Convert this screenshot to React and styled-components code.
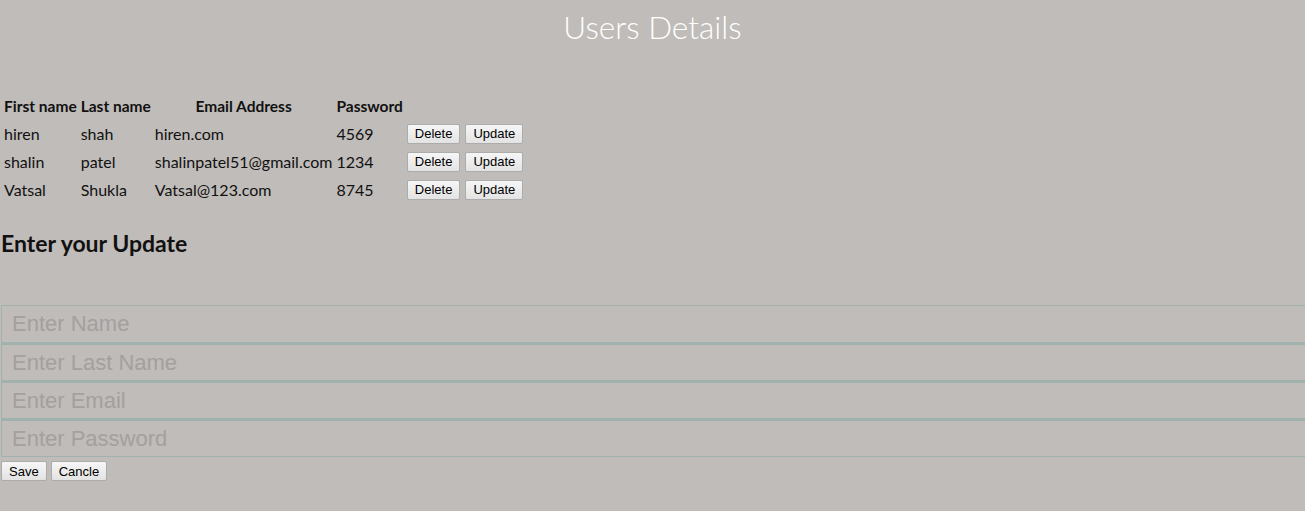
import React from 'react';
import styled, { createGlobalStyle } from 'styled-components';

const GlobalStyle = createGlobalStyle`
  html, body {
    margin: 0;
    padding: 0;
    background: #c0bcb9;
    overflow-x: hidden;
  }
  body {
    font-family: "Lato", "Noto Sans", sans-serif;
    color: #111;
  }
`;

const Page = styled.div`
  display: flex;
  flex-direction: column;
`;

const Title = styled.h1`
  margin: 8px 0 0;
  text-align: center;
  font-size: 31.5px;
  font-weight: 300;
  color: #fff;
  line-height: 38px;
`;

const Table = styled.table`
  margin-top: 45px;
  margin-left: 1px;
  border-spacing: 2px;
  font-size: 16px;
`;

const Th = styled.th`
  padding: 1px;
  font-weight: 700;
  font-size: 15.5px;
  height: 23px;
`;

const Td = styled.td`
  padding: 1px;
  height: 24px;
`;

const SmallButton = styled.button`
  font-family: "Liberation Sans", Arial, sans-serif;
  font-size: 13px;
  height: 20px;
  padding: 1px 7px;
  margin-right: 5px;
  background: linear-gradient(#f6f6f6, #e3e3e3);
  border: 1px solid #acacac;
  border-radius: 2px;
  color: #000;
  vertical-align: middle;
`;

const SubTitle = styled.h2`
  margin: 26px 0 0 1px;
  font-size: 23px;
  font-weight: 700;
  line-height: 26px;
`;

const Form = styled.div`
  margin-top: 49px;
  margin-left: 1px;
  width: calc(100% + 4px);
  display: flex;
  flex-direction: column;
`;

const Field = styled.input`
  box-sizing: border-box;
  width: 100%;
  height: 38px;
  margin: 0;
  padding: 0 10px;
  background: transparent;
  border: 1px solid #a1b2ae;
  border-top-width: ${p => (p.first ? '1px' : '2px')};
  font-family: "Liberation Sans", Arial, sans-serif;
  font-size: 22px;
  outline: none;
  &::placeholder {
    color: #a3a09e;
  }
`;

const Actions = styled.div`
  display: flex;
  gap: 4px;
  margin-top: 4px;
  padding-left: 1px;
`;

const ActionButton = styled(SmallButton)`
  margin-right: 0;
  height: 20px;
`;

const users = [
  { first: 'hiren', last: 'shah', email: 'hiren.com', pass: '4569' },
  { first: 'shalin', last: 'patel', email: 'shalinpatel51@gmail.com', pass: '1234' },
  { first: 'Vatsal', last: 'Shukla', email: 'Vatsal@123.com', pass: '8745' },
];

export default function App() {
  return (
    <Page>
      <GlobalStyle />
      <Title>Users Details</Title>
      <div>
        <Table>
          <thead>
            <tr>
              <Th>First name</Th>
              <Th>Last name</Th>
              <Th>Email Address</Th>
              <Th>Password</Th>
              <Th></Th>
            </tr>
          </thead>
          <tbody>
            {users.map((u, i) => (
              <tr key={i}>
                <Td>{u.first}</Td>
                <Td>{u.last}</Td>
                <Td>{u.email}</Td>
                <Td>{u.pass}</Td>
                <Td>
                  <SmallButton>Delete</SmallButton>
                  <SmallButton>Update</SmallButton>
                </Td>
              </tr>
            ))}
          </tbody>
        </Table>
      </div>
      <SubTitle>Enter your Update</SubTitle>
      <Form>
        <Field first placeholder="Enter Name" />
        <Field placeholder="Enter Last Name" />
        <Field placeholder="Enter Email" />
        <Field placeholder="Enter Password" />
      </Form>
      <Actions>
        <ActionButton>Save</ActionButton>
        <ActionButton>Cancle</ActionButton>
      </Actions>
    </Page>
  );
}
